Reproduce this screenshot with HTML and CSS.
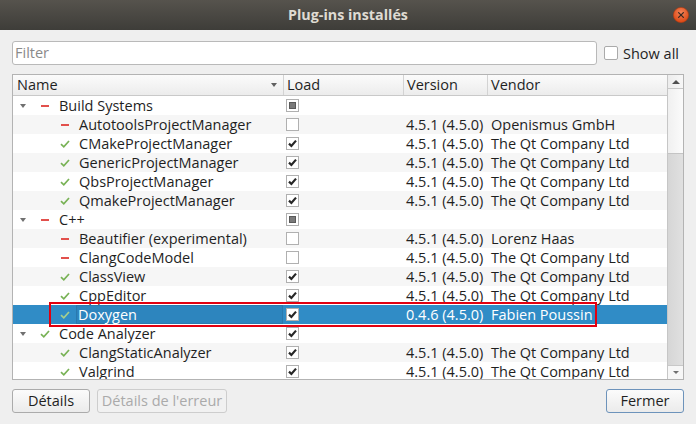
FILE: index.html
```html
<!DOCTYPE html>
<html lang="fr">
<head>
<meta charset="utf-8">
<title>Plug-ins installés</title>
<link rel="stylesheet" href="styles.css">
</head>
<body>
<div class="titlebar">
  <span></span>
  <span class="title">Plug-ins installés</span>
  <span class="close"><svg width="16" height="16" viewBox="0 0 16 16"><defs><radialGradient id="cg" cx="50%" cy="35%" r="60%"><stop offset="0" stop-color="#f5855a"/><stop offset="1" stop-color="#dc4a17"/></radialGradient></defs><circle cx="8" cy="8" r="7.6" fill="url(#cg)" stroke="#b93d10" stroke-width="0.6"/><path d="M5.6 5.6 L10.4 10.4 M10.4 5.6 L5.6 10.4" stroke="#3b2a22" stroke-width="1.3" stroke-linecap="round"/></svg></span>
</div>
<div class="content">
  <div class="filter-row">
    <div class="filter">Filter</div>
    <div class="showall"><span class="cbox"></span><span>Show all</span></div>
  </div>
  <div class="tree">
    <div class="tree-main">
      <div class="header">
        <div class="h name"><span>Name</span><span class="sort"></span></div>
        <div class="h">Load</div>
        <div class="h">Version</div>
        <div class="h">Vendor</div>
      </div>
      <div class="rows">
        <div class="row"><div class="c name"><span class="branch"></span><span class="ico"><span class="dash"></span></span><span class="label">Build Systems</span></div><div class="c load"><span class="cb part"><span></span></span></div><div class="c"></div><div class="c"></div></div>
        <div class="row"><div class="c name child"><span class="branch"></span><span class="ico"><span class="dash"></span></span><span class="label">AutotoolsProjectManager</span></div><div class="c load"><span class="cb"></span></div><div class="c ver">4.5.1 (4.5.0)</div><div class="c ven">Openismus GmbH</div></div>
        <div class="row"><div class="c name child"><span class="branch"></span><span class="ico"><svg class="ok" width="10" height="8" viewBox="0 0 10 8"><path d="M1 4.2 L3.8 6.8 L9 1"/></svg></span><span class="label">CMakeProjectManager</span></div><div class="c load"><span class="cb on"><svg width="11" height="11" viewBox="0 0 11 11"><path d="M2 5.6 L4.4 8 L9 2.6"/></svg></span></div><div class="c ver">4.5.1 (4.5.0)</div><div class="c ven">The Qt Company Ltd</div></div>
        <div class="row"><div class="c name child"><span class="branch"></span><span class="ico"><svg class="ok" width="10" height="8" viewBox="0 0 10 8"><path d="M1 4.2 L3.8 6.8 L9 1"/></svg></span><span class="label">GenericProjectManager</span></div><div class="c load"><span class="cb on"><svg width="11" height="11" viewBox="0 0 11 11"><path d="M2 5.6 L4.4 8 L9 2.6"/></svg></span></div><div class="c ver">4.5.1 (4.5.0)</div><div class="c ven">The Qt Company Ltd</div></div>
        <div class="row"><div class="c name child"><span class="branch"></span><span class="ico"><svg class="ok" width="10" height="8" viewBox="0 0 10 8"><path d="M1 4.2 L3.8 6.8 L9 1"/></svg></span><span class="label">QbsProjectManager</span></div><div class="c load"><span class="cb on"><svg width="11" height="11" viewBox="0 0 11 11"><path d="M2 5.6 L4.4 8 L9 2.6"/></svg></span></div><div class="c ver">4.5.1 (4.5.0)</div><div class="c ven">The Qt Company Ltd</div></div>
        <div class="row"><div class="c name child"><span class="branch"></span><span class="ico"><svg class="ok" width="10" height="8" viewBox="0 0 10 8"><path d="M1 4.2 L3.8 6.8 L9 1"/></svg></span><span class="label">QmakeProjectManager</span></div><div class="c load"><span class="cb on"><svg width="11" height="11" viewBox="0 0 11 11"><path d="M2 5.6 L4.4 8 L9 2.6"/></svg></span></div><div class="c ver">4.5.1 (4.5.0)</div><div class="c ven">The Qt Company Ltd</div></div>
        <div class="row"><div class="c name"><span class="branch"></span><span class="ico"><span class="dash"></span></span><span class="label">C++</span></div><div class="c load"><span class="cb part"><span></span></span></div><div class="c"></div><div class="c"></div></div>
        <div class="row"><div class="c name child"><span class="branch"></span><span class="ico"><span class="dash"></span></span><span class="label">Beautifier (experimental)</span></div><div class="c load"><span class="cb"></span></div><div class="c ver">4.5.1 (4.5.0)</div><div class="c ven">Lorenz Haas</div></div>
        <div class="row"><div class="c name child"><span class="branch"></span><span class="ico"><span class="dash"></span></span><span class="label">ClangCodeModel</span></div><div class="c load"><span class="cb"></span></div><div class="c ver">4.5.1 (4.5.0)</div><div class="c ven">The Qt Company Ltd</div></div>
        <div class="row"><div class="c name child"><span class="branch"></span><span class="ico"><svg class="ok" width="10" height="8" viewBox="0 0 10 8"><path d="M1 4.2 L3.8 6.8 L9 1"/></svg></span><span class="label">ClassView</span></div><div class="c load"><span class="cb on"><svg width="11" height="11" viewBox="0 0 11 11"><path d="M2 5.6 L4.4 8 L9 2.6"/></svg></span></div><div class="c ver">4.5.1 (4.5.0)</div><div class="c ven">The Qt Company Ltd</div></div>
        <div class="row"><div class="c name child"><span class="branch"></span><span class="ico"><svg class="ok" width="10" height="8" viewBox="0 0 10 8"><path d="M1 4.2 L3.8 6.8 L9 1"/></svg></span><span class="label">CppEditor</span></div><div class="c load"><span class="cb on"><svg width="11" height="11" viewBox="0 0 11 11"><path d="M2 5.6 L4.4 8 L9 2.6"/></svg></span></div><div class="c ver">4.5.1 (4.5.0)</div><div class="c ven">The Qt Company Ltd</div></div>
        <div class="row sel"><div class="c name child"><span class="branch"></span><span class="ico"><svg class="ok" width="10" height="8" viewBox="0 0 10 8"><path d="M1 4.2 L3.8 6.8 L9 1"/></svg></span><span class="label focus">Doxygen</span></div><div class="c load"><span class="cb on"><svg width="11" height="11" viewBox="0 0 11 11"><path d="M2 5.6 L4.4 8 L9 2.6"/></svg></span></div><div class="c ver">0.4.6 (4.5.0)</div><div class="c ven">Fabien Poussin</div><span class="mark"></span></div>
        <div class="row"><div class="c name"><span class="branch"></span><span class="ico"><svg class="ok" width="10" height="8" viewBox="0 0 10 8"><path d="M1 4.2 L3.8 6.8 L9 1"/></svg></span><span class="label">Code Analyzer</span></div><div class="c load"><span class="cb on"><svg width="11" height="11" viewBox="0 0 11 11"><path d="M2 5.6 L4.4 8 L9 2.6"/></svg></span></div><div class="c"></div><div class="c"></div></div>
        <div class="row"><div class="c name child"><span class="branch"></span><span class="ico"><svg class="ok" width="10" height="8" viewBox="0 0 10 8"><path d="M1 4.2 L3.8 6.8 L9 1"/></svg></span><span class="label">ClangStaticAnalyzer</span></div><div class="c load"><span class="cb on"><svg width="11" height="11" viewBox="0 0 11 11"><path d="M2 5.6 L4.4 8 L9 2.6"/></svg></span></div><div class="c ver">4.5.1 (4.5.0)</div><div class="c ven">The Qt Company Ltd</div></div>
        <div class="row"><div class="c name child"><span class="branch"></span><span class="ico"><svg class="ok" width="10" height="8" viewBox="0 0 10 8"><path d="M1 4.2 L3.8 6.8 L9 1"/></svg></span><span class="label">Valgrind</span></div><div class="c load"><span class="cb on"><svg width="11" height="11" viewBox="0 0 11 11"><path d="M2 5.6 L4.4 8 L9 2.6"/></svg></span></div><div class="c ver">4.5.1 (4.5.0)</div><div class="c ven">The Qt Company Ltd</div></div>
      </div>
    </div>
    <div class="scrollbar">
      <div class="sb-btn"><span class="up"></span></div>
      <div class="sb-track"></div>
      <div class="sb-handle"></div>
      <div class="sb-btn down-btn"><span class="down"></span></div>
    </div>
  </div>
  <div class="buttons">
    <div class="btn">Détails</div>
    <div class="btn disabled">Détails de l'erreur</div>
    <div class="btn default">Fermer</div>
  </div>
</div>
</body>
</html>
```
FILE: styles.css
```css
* { box-sizing: border-box; }
html, body { margin: 0; padding: 0; }
body {
  width: 696px;
  height: 424px;
  overflow: hidden;
  background: #efefef;
  font-family: "Open Sans", "DejaVu Sans", sans-serif;
  font-size: 14.5px;
  color: #1f1f1f;
}
.titlebar {
  height: 30px;
  background: linear-gradient(#56534d, #3e3d39);
  display: grid;
  grid-template-columns: 1fr auto 1fr;
  align-items: center;
}
.title {
  color: #dfdbd2;
  font-weight: bold;
  font-size: 14.3px;
  line-height: 30px;
}
.close {
  justify-self: end;
  margin-right: 7px;
  width: 16px;
  height: 16px;
  display: flex;
}
.content { padding: 11px 12px 0 12px; }
.filter-row {
  display: flex;
  align-items: center;
  gap: 7px;
  height: 24px;
}
.filter {
  flex: 1;
  height: 24px;
  background: #fff;
  border: 1px solid #b9b9b9;
  border-radius: 3px;
  padding-left: 2px;
  line-height: 22px;
  color: #8a8a8a;
}
.showall {
  width: 80px;
  display: flex;
  align-items: center;
  gap: 5px;
}
.cbox {
  width: 14px;
  height: 14px;
  background: #fff;
  border: 1px solid #aaa;
  border-radius: 2px;
}
.tree {
  margin-top: 9px;
  height: 306px;
  border: 1px solid #b3b3b3;
  background: #fff;
  display: flex;
}
.tree-main {
  flex: 1;
  overflow: hidden;
  position: relative;
}
.header, .row {
  display: grid;
  grid-template-columns: 270px 120px 84px 180px;
}
.header {
  height: 21px;
  border-bottom: 1px solid #c9c9c9;
  background: linear-gradient(#fbfbfb, #ececec);
}
.h {
  border-left: 1px solid #d3d3d3;
  padding-left: 3px;
  line-height: 20px;
}
.h.name {
  border-left: none;
  padding-left: 4px;
  padding-right: 6px;
  display: flex;
  align-items: center;
  justify-content: space-between;
}
.sort {
  width: 0; height: 0;
  border-left: 3.5px solid transparent;
  border-right: 3.5px solid transparent;
  border-top: 4px solid #606060;
}
.row {
  height: 19px;
  line-height: 19px;
  background: #fff;
  position: relative;
}
.row:nth-child(even) { background: #f6f6f6; }
.c { white-space: nowrap; overflow: hidden; display: flex; align-items: center; }
.c.ver { padding-left: 3px; }
.c.ven { padding-left: 4px; }
.c.load { padding-left: 3px; }
.name .branch { width: 20px; height: 19px; flex: none; display: flex; align-items: center; justify-content: center; }
.name:not(.child) .branch::before {
  content: "";
  width: 0; height: 0;
  border-left: 3.5px solid transparent;
  border-right: 3.5px solid transparent;
  border-top: 4px solid #707070;
}
.name.child { padding-left: 20px; }
.ico { width: 24px; height: 19px; flex: none; display: flex; align-items: center; justify-content: center; }
.dash { width: 8px; height: 2px; background: #e2504c; }
.ok { display: block; }
.ok path { fill: none; stroke: #78b255; stroke-width: 1.7; }
.label { padding-left: 2px; flex: 1; height: 19px; }
.cb {
  width: 13px;
  height: 13px;
  border: 1px solid #b0b0b0;
  background: #fff;
  display: flex;
  align-items: center;
  justify-content: center;
}
.cb svg path { fill: none; stroke: #262626; stroke-width: 2.2; }
.cb.part span {
  width: 7px;
  height: 7px;
  background: #7a7a7a;
  border: 1px solid #5a5a5a;
}
.row.sel { background: #308cc6; color: #fff; }
.row.sel .label.focus {
  background: #2d85be;
  border: 1px solid #2a79ae;
  padding-left: 1px;
  margin-left: -1px;
  line-height: 17px;
}
.row.sel .ok path { stroke: #a6cf8c; }
.mark {
  position: absolute;
  left: 36px;
  top: -3px;
  width: 548px;
  height: 25px;
  border: 2px solid #e3000f;
  z-index: 2;
}
.scrollbar {
  width: 16px;
  border-left: 1px solid #c6c6c6;
  display: flex;
  flex-direction: column;
  background: #f3f3f3;
}
.sb-btn {
  height: 14px;
  flex: none;
  background: linear-gradient(to right, #ededed, #f7f7f7);
  border-bottom: 1px solid #c8c8c8;
  display: flex;
  align-items: center;
  justify-content: center;
}
.down-btn { border-bottom: none; border-top: 1px solid #c8c8c8; background: #f7f7f7; }
.up {
  width: 0; height: 0;
  border-left: 4px solid transparent;
  border-right: 4px solid transparent;
  border-bottom: 4px solid #505050;
}
.down {
  width: 0; height: 0;
  border-left: 3.5px solid transparent;
  border-right: 3.5px solid transparent;
  border-top: 3.5px solid #707070;
}
.sb-track {
  flex: 1;
  background: linear-gradient(to right, #f0f0f0, #fbfbfb);
}
.sb-handle {
  height: 212px;
  flex: none;
  background: linear-gradient(to right, #d6d6d6, #e0e0e0);
  border-top: 1px solid #c4c4c4;
}
.buttons {
  margin-top: 9px;
  display: flex;
  gap: 7px;
  height: 24px;
}
.btn {
  width: 78px;
  height: 24px;
  border: 1px solid #ababab;
  border-radius: 3px;
  background: linear-gradient(#fbfbfb, #ebebeb);
  text-align: center;
  line-height: 22px;
  color: #1f1f1f;
}
.btn.disabled {
  width: 130px;
  border-color: #cdcdcd;
  background: #f1f1f1;
  color: #aaaaaa;
}
.btn.default {
  margin-left: auto;
  border-color: #6d93bb;
}
```
